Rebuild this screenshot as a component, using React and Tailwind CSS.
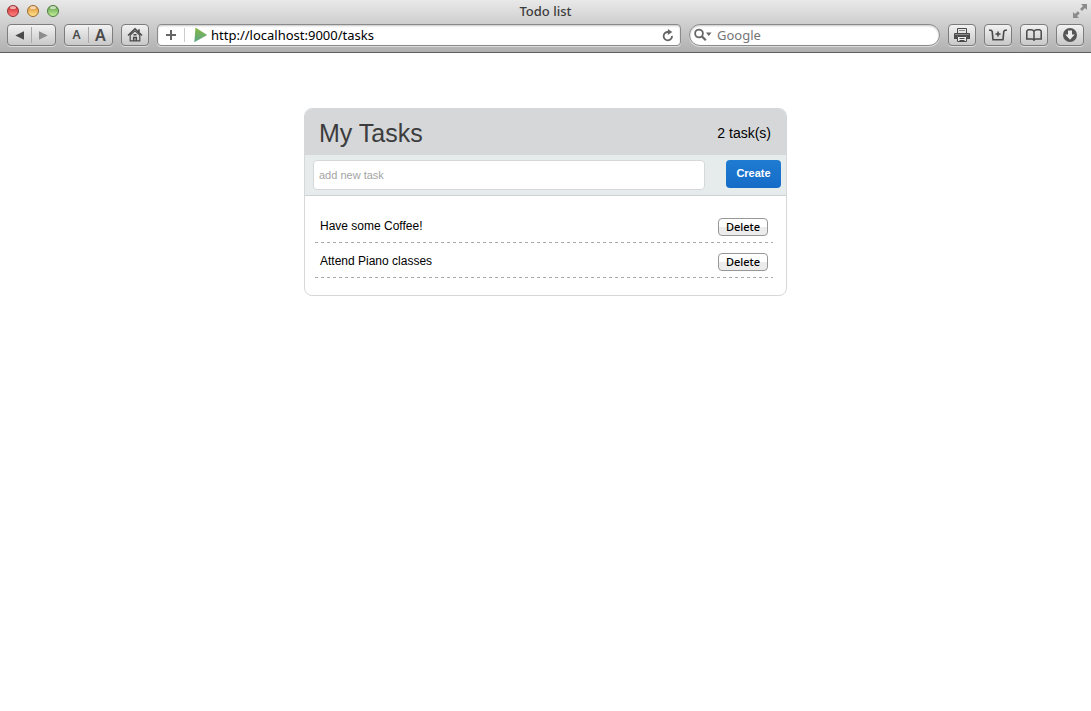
import React, { useState } from "react";

const toolButton =
  "flex h-[22px] shrink-0 items-center justify-center rounded-[4px] border border-[#7d7d7d] bg-gradient-to-b from-[#f2f2f2] to-[#c8c8c8] text-[#4a4a4a] shadow-[0_1px_0_#dcdcdc]";

function TrafficLight({ label, className }) {
  return (
    <button
      type="button"
      aria-label={label}
      className={`relative size-3 overflow-hidden rounded-full border ${className}`}
    >
      <span className="absolute inset-x-[2px] top-0 h-[3px] rounded-full bg-white/60" />
    </button>
  );
}

function TitleBar() {
  return (
    <div className="grid h-6 grid-cols-3 items-center px-[7px] pb-[2px]">
      <div className="flex gap-2">
        <TrafficLight label="Close" className="border-[#8d3333] bg-gradient-to-b from-[#d0222c] to-[#ff8080]" />
        <TrafficLight label="Minimize" className="border-[#9a6a2c] bg-gradient-to-b from-[#dd8f33] to-[#ffe48a]" />
        <TrafficLight label="Zoom" className="border-[#4c7a3a] bg-gradient-to-b from-[#62a04c] to-[#c2f09a]" />
      </div>
      <div className="text-center text-[13px] leading-[22px] font-medium text-[#3c3c3c]">Todo list</div>
      <button type="button" aria-label="Full screen" className="-mr-1 justify-self-end text-[#8a8a8a]">
        <svg width="16" height="16" viewBox="0 0 16 16" fill="currentColor" className="block">
          <path d="M9 1h6v6l-2-2-3 3-2-2 3-3zM7 15H1V9l2 2 2.800-2.800 2 2L5 13z" />
        </svg>
      </button>
    </div>
  );
}

function Toolbar() {
  return (
    <div className="flex gap-2 px-[7px] pb-[6px]">
      <div className={`${toolButton} w-[49px]`}>
        <button type="button" aria-label="Back" className="flex h-full flex-1 items-center justify-center">
          <svg width="9" height="9" viewBox="0 0 9 9" fill="#4a4a4a"><path d="M9 .3v8.400L.3 4.500z" /></svg>
        </button>
        <span className="h-4 w-px bg-[#a8a8a8]" />
        <button type="button" aria-label="Forward" className="flex h-full flex-1 items-center justify-center">
          <svg width="9" height="9" viewBox="0 0 9 9" fill="#8c8c8c"><path d="M0 .3v8.400l8.700-4.200z" /></svg>
        </button>
      </div>
      <div className={`${toolButton} w-[49px]`}>
        <button type="button" aria-label="Smaller text" className="h-full flex-1 text-xs leading-5 font-semibold">A</button>
        <span className="h-4 w-px bg-[#a8a8a8]" />
        <button type="button" aria-label="Larger text" className="h-full flex-1 text-base leading-5 font-semibold">A</button>
      </div>
      <button type="button" aria-label="Home" className={`${toolButton} w-7`}>
        <svg width="16" height="16" viewBox="0 0 16 16" fill="none" stroke="currentColor" strokeWidth="1.500">
          <path d="M1 8.500 8 1.800l7 6.700M12 5V2.200" />
          <path d="M3.200 8v5.800h9.600V8L8 3.800z" strokeWidth="1.200" />
          <path d="M6.700 14v-3.500h2.600V14M6.500 7.700h3" />
        </svg>
      </button>
      <div className="flex h-[22px] min-w-0 flex-[522] items-center rounded-[4px] border border-[#8a8a8a] bg-white shadow-[inset_0_1px_2px_#c8c8c8,0_1px_0_#dcdcdc]">
        <button type="button" aria-label="Add bookmark" className="flex w-[26px] shrink-0 justify-center">
          <svg width="10" height="10" viewBox="0 0 10 10" stroke="#666" strokeWidth="2"><path d="M5 0v10M0 5h10" /></svg>
        </button>
        <span className="h-[14px] w-px bg-[#cccccc]" />
        <svg width="14" height="16" viewBox="0 0 14 16" className="ml-[9px] shrink-0">
          <defs>
            <linearGradient id="play" x1="0" y1="0" x2="0" y2="1">
              <stop offset="0" stopColor="#86b83e" />
              <stop offset="1" stopColor="#5aa58a" />
            </linearGradient>
          </defs>
          <path d="M1.500.5 13.200 8 .3 15.300z" fill="url(#play)" />
        </svg>
        <input
          aria-label="Address"
          defaultValue="http://localhost:9000/tasks"
          className="ml-[3px] min-w-0 flex-1 bg-transparent text-[13px] leading-5 text-black outline-none"
        />
        <button type="button" aria-label="Reload" className="mr-[6px] text-[#666]">
          <svg width="12" height="13" viewBox="0 0 12 13" className="block">
            <path d="M10 6.800A4.200 4.200 0 1 1 6.200 3" fill="none" stroke="currentColor" strokeWidth="1.800" />
            <path d="M5.800 0v6L10.300 3z" fill="currentColor" />
          </svg>
        </button>
      </div>
      <div className="flex h-[22px] min-w-0 flex-[245] items-center rounded-full border border-[#8a8a8a] bg-white pl-1 shadow-[inset_0_1px_2px_#c8c8c8,0_1px_0_#dcdcdc]">
        <svg width="18" height="14" viewBox="0 0 18 14" className="shrink-0">
          <circle cx="5" cy="5.500" r="3.900" fill="none" stroke="#666" strokeWidth="1.800" />
          <path d="m7.800 8.300 4 4" stroke="#666" strokeWidth="2.200" />
          <path d="M12 4.500h5.500L14.800 8z" fill="#666" />
        </svg>
        <input
          aria-label="Search"
          placeholder="Google"
          className="ml-[5px] min-w-0 flex-1 bg-transparent text-[13px] leading-5 outline-none placeholder:text-[#757575]"
        />
      </div>
      <button type="button" aria-label="Print" className={`${toolButton} w-7`}>
        <svg width="16" height="14" viewBox="0 0 16 14" fill="none">
          <path d="M3.500 5V.5h9V5" stroke="currentColor" />
          <path d="M5 2.500h6" stroke="#8a8a8a" />
          <path d="M1 5h14a1 1 0 0 1 1 1v5h-3V8H3v3H0V6a1 1 0 0 1 1-1z" fill="currentColor" />
          <path d="M1 6.500h14" stroke="#8a8a8a" />
          <path d="M3.500 8.500h9v5h-9z" fill="#ececec" stroke="currentColor" />
          <path d="M5.500 10.500h5M5.500 12.500h5" stroke="currentColor" />
        </svg>
      </button>
      <button type="button" aria-label="Add to reading" className={`${toolButton} w-7`}>
        <svg width="18" height="12" viewBox="0 0 18 12" fill="none" stroke="currentColor" strokeWidth="1.600">
          <path d="M0 1.200h2L3.200 2.400l.8 8.400h10l.8-8.400L16 1.200h2" />
          <path d="M9 2.500v5M6.500 5h5" strokeWidth="1.600" />
        </svg>
      </button>
      <button type="button" aria-label="Bookmarks" className={`${toolButton} w-7`}>
        <svg width="16" height="12" viewBox="0 0 16 12" fill="none" stroke="currentColor" strokeWidth="1.500">
          <path d="M8 2.500C7.500 1.300 6.500.8 5 .8H2.200L.8 2v8h5.400c.9 0 1.500.4 1.800 1.200.3-.8.9-1.200 1.800-1.200h5.400V2L13.800.8H11c-1.500 0-2.500.5-3 1.700zv8.500" />
        </svg>
      </button>
      <button type="button" aria-label="Downloads" className={`${toolButton} w-7`}>
        <svg width="14" height="14" viewBox="0 0 14 14">
          <circle cx="7" cy="7" r="7" fill="#555" />
          <path d="M5 2.500h4v4h2.700L7 11.800 2.300 6.500H5z" fill="#ededed" />
        </svg>
      </button>
    </div>
  );
}

function TaskCard() {
  const [tasks, setTasks] = useState(["Have some Coffee!", "Attend Piano classes"]);
  const [draft, setDraft] = useState("");

  function create(event) {
    event.preventDefault();
    if (!draft.trim()) return;
    setTasks([...tasks, draft.trim()]);
    setDraft("");
  }

  return (
    <main className="mx-auto mt-[55px] w-full max-w-[483px] overflow-hidden rounded-lg border border-[#d5d7d9] bg-white font-['Liberation_Sans',Arial,sans-serif] text-black">
      <header className="flex h-[46px] items-center justify-between bg-[#d5d7d9] pt-[2px] pr-[15px] pl-[14px]">
        <h1 className="text-[25px] leading-[30px] text-[#3c3c3c]">My Tasks</h1>
        <span className="text-sm">{tasks.length} task(s)</span>
      </header>
      <form onSubmit={create} className="flex items-start gap-[21px] border-b border-[#cdd3d5] bg-[#e6ecec] pt-[5px] pr-[5px] pb-[5px] pl-2">
        <input
          aria-label="New task"
          value={draft}
          onChange={(event) => setDraft(event.target.value)}
          placeholder="add new task"
          className="h-[30px] min-w-0 flex-1 rounded-[4px] border border-[#d5d7d9] bg-white px-[5px] text-[11px] outline-none placeholder:text-[#a4a4a4]"
        />
        <button
          type="submit"
          className="h-7 w-[55px] rounded-[4px] bg-gradient-to-b from-[#1f7bd1] to-[#156cc8] pb-[2px] text-[11px] font-bold text-white"
        >
          Create
        </button>
      </form>
      <ul className="pt-3 pr-[13px] pb-[17px] pl-[10px]">
        {tasks.map((task, index) => (
          <li
            key={index}
            className="flex h-[35px] items-end justify-between bg-[repeating-linear-gradient(90deg,#a9a9a9_0_3px,transparent_3px_6px)] bg-[length:100%_1px] bg-bottom bg-no-repeat pr-[5px] pb-[7px] pl-[5px]"
          >
            <span className="text-xs leading-5">{task}</span>
            <button
              type="button"
              onClick={() => setTasks(tasks.filter((_, i) => i !== index))}
              className="h-[18px] w-[50px] rounded-[4px] border border-[#979797] bg-gradient-to-b from-white from-50% to-[#ececec] to-50% font-['Noto_Sans',sans-serif] text-[11px] leading-4 font-medium"
            >
              Delete
            </button>
          </li>
        ))}
      </ul>
    </main>
  );
}

export default function App() {
  return (
    <div className="min-h-screen bg-white font-['Noto_Sans',sans-serif]">
      <div className="border-b border-[#5e5e5e] bg-gradient-to-b from-[#e9e9e9] to-[#b0b0b0]">
        <TitleBar />
        <Toolbar />
      </div>
      <TaskCard />
    </div>
  );
}
